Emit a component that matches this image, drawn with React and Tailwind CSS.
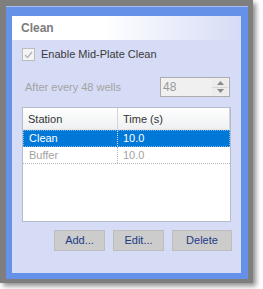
import React from 'react';

const rows = [
    { station: 'Clean', time: '10.0', selected: true },
    { station: 'Buffer', time: '10.0', selected: false },
];

const buttons = [
    { label: 'Add...', w: 'w-[51px]' },
    { label: 'Edit...', w: 'w-[51px]' },
    { label: 'Delete', w: 'w-[60px]' },
];

const SpinBox = ({ value }) => (
    <div className="w-[70px] h-[20px] border border-[#acacac] bg-[#f0f0f0] flex">
        <span className="flex-1 pl-[2px] leading-[18px] text-[12px] text-[#9a9a9a]">{value}</span>
        <div className="w-[16px] my-[1px] mr-[1px] flex flex-col">
            <div className="flex-1 flex items-center justify-center border-b border-[#d6d6d6] bg-[#ececec]">
                <svg width="7" height="4" viewBox="0 0 7 4"><path d="M0 4 L3.5 0 L7 4 Z" fill="#8a8a8a" /></svg>
            </div>
            <div className="flex-1 flex items-center justify-center bg-[#ececec]">
                <svg width="7" height="4" viewBox="0 0 7 4"><path d="M0 0 L3.5 4 L7 0 Z" fill="#8a8a8a" /></svg>
            </div>
        </div>
    </div>
);

const StationList = () => (
    <div className="w-[209px] h-[115px] border border-[#b4bccb] bg-white">
        {/* Header */}
        <div className="flex h-[22px] bg-gradient-to-b from-white to-[#eef0f2] text-[#333] border-b border-[#e2e2e2]">
            <div className="w-[95px] pl-[5px] leading-[22px] border-r border-[#d5d5d5]">Station</div>
            <div className="flex-1 pl-[5px] leading-[22px] border-r border-[#cfd6d2]">Time (s)</div>
        </div>
        {rows.map(r => (
            <div
                key={r.station}
                className={`flex h-[17px] leading-[16px] border-b border-dotted ${r.selected ? 'bg-[#0078d7] text-white border-[#e6e6e6] outline outline-1 outline-dotted outline-[#7fb3ea] -outline-offset-1' : 'text-[#a2a2a2] border-[#b8b8b8]'}`}
            >
                <div className={`w-[95px] pl-[6px] border-r border-dotted ${r.selected ? 'border-[#d0e2f5]' : 'border-[#b8b8b8]'}`}>{r.station}</div>
                <div className="flex-1 pl-[5px]">{r.time}</div>
            </div>
        ))}
    </div>
);

export default function App() {
    return (
        <div className="w-[263px] h-[289px] bg-white overflow-hidden" style={{ fontFamily: '"Liberation Sans", Arial, sans-serif' }}>
            <div className="w-[253px] h-[283px] bg-[#7e7e7e] pt-[6px] pl-[6px] shadow-[3px_3px_5px_rgba(0,0,0,0.45)]">
                <div className="w-[242px] h-[273px] bg-[#6592e8] border-t border-[#a9c0f1] pt-[9px] pl-[6px]">
                    <div className="w-[229px] h-[257px] bg-[#d6dcf6] text-[11px]">
                        {/* Title */}
                        <div className="h-[24px] pl-[9px] flex items-center bg-gradient-to-r from-white from-40% to-[#d6dcf6] text-[12px] font-bold text-[#7c7c7c]">
                            Clean
                        </div>

                        <div className="pl-[10px] pt-[8px]">
                            {/* Checkbox */}
                            <div className="flex items-center h-[13px]">
                                <div className="w-[13px] h-[13px] border border-[#bcbcbc] bg-[#f4f4f4] flex items-center justify-center">
                                    <svg width="9" height="8" viewBox="0 0 9 8">
                                        <path d="M1 4 L3.5 6.5 L8 1" fill="none" stroke="#b5b5b5" strokeWidth="1.3" />
                                    </svg>
                                </div>
                                <span className="ml-[6px] text-[#3a3a3a]">Enable Mid-Plate Clean</span>
                            </div>

                            {/* Wells interval */}
                            <div className="flex items-center justify-between mt-[16px] w-[208px]">
                                <span className="pl-[3px] text-[#a3a3a3]">After every 48 wells</span>
                                <SpinBox value="48" />
                            </div>

                            <div className="mt-[10px] text-[11px]">
                                <StationList />
                            </div>

                            {/* Buttons */}
                            <div className="flex justify-end gap-[8px] mt-[8px] w-[210px]">
                                {buttons.map(b => (
                                    <button key={b.label} className={`${b.w} h-[21px] bg-[#cccccc] border border-[#bdbdbd] text-[#1d3a86] text-[11px]`}>
                                        {b.label}
                                    </button>
                                ))}
                            </div>
                        </div>
                    </div>
                </div>
            </div>
        </div>
    );
}
